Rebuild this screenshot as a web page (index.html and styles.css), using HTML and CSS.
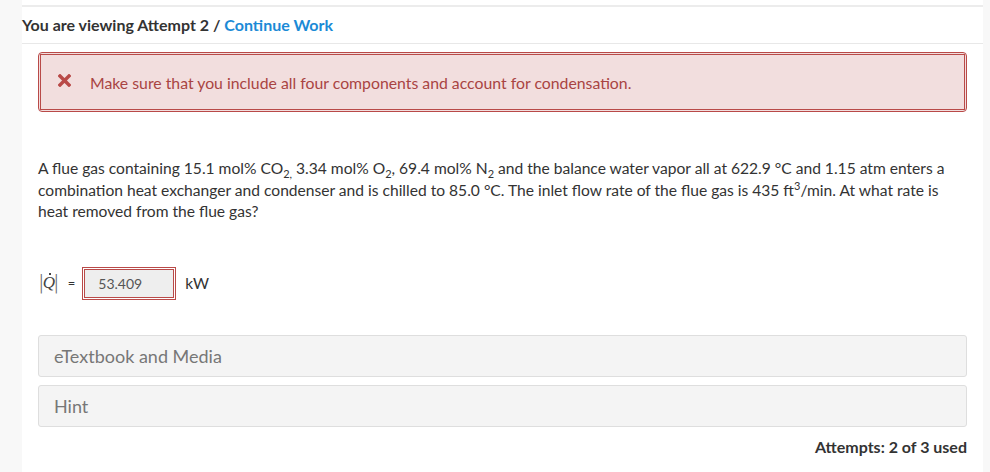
FILE: index.html
```html
<!DOCTYPE html>
<html>
<head>
<meta charset="utf-8">
<link rel="stylesheet" href="styles.css">
</head>
<body>
<div class="page">
  <main class="content">
    <div class="topline"></div>
    <header class="viewing">You are viewing Attempt 2 / <a class="link" href="#">Continue Work</a></header>
    <section class="inner">
      <div class="alert">
        <div class="alert-in">
          <svg class="xicon" width="13" height="13" viewBox="0 0 13 13"><path d="M2 2 L11 11 M11 2 L2 11" stroke="#b94a48" stroke-width="3.4" stroke-linecap="square"/></svg>
          <span>Make sure that you include all four components and account for condensation.</span>
        </div>
      </div>
      <p class="question">A flue gas containing 15.1 mol% CO<sub>2,</sub> 3.34 mol% O<sub>2</sub>, 69.4 mol% N<sub>2</sub> and the balance water vapor all at 622.9 °C and 1.15 atm enters a combination heat exchanger and condenser and is chilled to 85.0 °C. The inlet flow rate of the flue gas is 435 ft<sup>3</sup>/min. At what rate is heat removed from the flue gas?</p>
      <div class="answer">
        <span class="qvar"><span class="bar">|</span><span class="qdot">Q</span><span class="bar">|</span></span>
        <span class="eq">=</span>
        <span class="inputbox"><span class="inputin">53.409</span></span>
        <span class="unit">kW</span>
      </div>
      <div class="panel">eTextbook and Media</div>
      <div class="panel">Hint</div>
      <div class="attempts">Attempts: 2 of 3 used</div>
    </section>
  </main>
</div>
</body>
</html>
```
FILE: styles.css
```css
html, body { margin: 0; padding: 0; }
body {
  background: #f8f8f8;
  font-family: Lato, "Liberation Sans", sans-serif;
  color: #333;
  width: 990px;
  height: 472px;
  overflow: hidden;
}
.page {
  display: flex;
  padding-left: 22px;
  height: 472px;
}
.content {
  width: 961px;
  background: #fff;
  padding-top: 5px;
}
.topline { border-top: 2px solid #ececec; }
.viewing {
  font-size: 16px;
  font-weight: 700;
  color: #333;
  height: 36px;
  line-height: 36px;
  border-bottom: 1px solid #e8e8e8;
}
.link { color: #1b8ad6; text-decoration: none; }
.inner { padding: 8px 16px 0 16px; }
.alert {
  border: 1px solid #b94a48;
  border-radius: 4px;
  padding: 1px;
  background: #f2dede;
}
.alert-in {
  border: 1px solid #b94a48;
  height: 54px;
  display: flex;
  align-items: center;
  gap: 19px;
  padding-left: 17px;
  color: #a94442;
  font-size: 15.8px;
}
.xicon { display: block; margin-top: -3px; }
.question {
  margin: 46px 0 0 0;
  font-size: 15.6px;
  line-height: 21.5px;
  color: #333;
}
.question sub, .question sup { font-size: 11px; line-height: 1; vertical-align: baseline; position: relative; }
.question sub { top: 4px; }
.question sup { top: -6px; }
.answer {
  display: flex;
  align-items: center;
  margin-top: 44px;
  height: 33px;
}
.qvar {
  font-family: "Liberation Serif", serif;
  font-size: 17px;
  color: #444;
  display: flex;
  align-items: center;
  margin-left: 2px;
  flex: none;
}
.bar { font-family: "DejaVu Sans", sans-serif; font-size: 20px; color: #666; transform: scaleX(0.6); margin: -2px -2px 0 -2px; }
.qdot { position: relative; font-style: italic; }
.qdot::before {
  content: "";
  position: absolute;
  left: 6px;
  top: 0px;
  width: 2px;
  height: 2px;
  background: #444;
}
.eq { margin-left: 10px; font-size: 13px; color: #333; }
.inputbox {
  flex: none;
  margin-left: 7px;
  border: 1px solid #b94a48;
  padding: 1px;
  width: 90px;
  height: 29px;
}
.inputin {
  display: flex;
  align-items: center;
  height: 27px;
  border: 1px solid #b94a48;
  background: #eee;
  padding-left: 13px;
  font-size: 14px;
  color: #555;
}
.unit { margin-left: 9px; font-size: 15.5px; color: #333; }
.panel {
  background: #f4f4f4;
  border: 1px solid #dedede;
  border-radius: 3px;
  height: 40px;
  line-height: 40px;
  padding-left: 15px;
  font-size: 18px;
  color: #777;
}
.answer + .panel { margin-top: 35px; }
.panel + .panel { margin-top: 8px; }
.attempts {
  text-align: right;
  font-size: 16px;
  font-weight: 700;
  color: #333;
  margin-top: 10px;
}
```
